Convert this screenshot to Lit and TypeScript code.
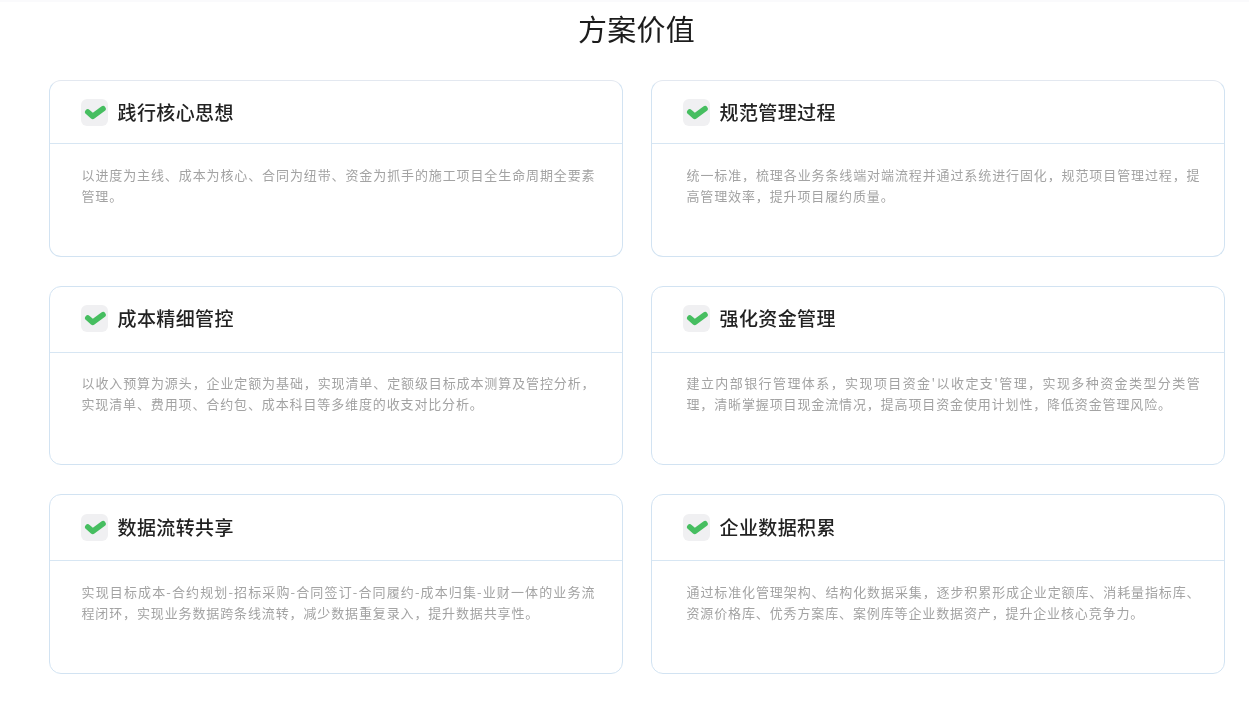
import { LitElement, html, css, svg } from "lit";
import { customElement } from "lit/decorators.js";

const cards = [
  { t: "践行核心思想", d: ["以进度为主线、成本为核心、合同为纽带、资金为抓手的施工项目全生命周期全要素", "管理。"] },
  { t: "规范管理过程", d: ["统一标准，梳理各业务条线端对端流程并通过系统进行固化，规范项目管理过程，提", "高管理效率，提升项目履约质量。"] },
  { t: "成本精细管控", d: ["以收入预算为源头，企业定额为基础，实现清单、定额级目标成本测算及管控分析，", "实现清单、费用项、合约包、成本科目等多维度的收支对比分析。"] },
  { t: "强化资金管理", d: ["建立内部银行管理体系，实现项目资金'以收定支'管理，实现多种资金类型分类管", "理，清晰掌握项目现金流情况，提高项目资金使用计划性，降低资金管理风险。"] },
  { t: "数据流转共享", d: ["实现目标成本-合约规划-招标采购-合同签订-合同履约-成本归集-业财一体的业务流", "程闭环，实现业务数据跨条线流转，减少数据重复录入，提升数据共享性。"] },
  { t: "企业数据积累", d: ["通过标准化管理架构、结构化数据采集，逐步积累形成企业定额库、消耗量指标库、", "资源价格库、优秀方案库、案例库等企业数据资产，提升企业核心竞争力。"] },
];

const check = svg`<path d="M6.8 13 L11.8 17.3 L22 9.8" fill="none" stroke="#46be60" stroke-width="5.6" stroke-linecap="round" stroke-linejoin="round"/>`;

@customElement("app-root")
export class AppRoot extends LitElement {
  static styles = css`
    :host {
      display: block;
      width: 1249px;
      height: 707px;
      background: #fff;
      overflow: hidden;
      font-family: "Noto Sans CJK SC", "Liberation Sans", sans-serif;
    }
    .page {
      display: flex;
      flex-direction: column;
      align-items: center;
      padding-left: 24px;
      border-top: 2px solid #fafafc;
      filter: blur(0.3px);
    }
    h1 {
      margin: 0;
      height: 78px;
      padding-top: 5px;
      box-sizing: border-box;
      font-size: 29px;
      line-height: 42px;
      font-weight: 400;
      color: #1c1c1c;
      letter-spacing: 0.3px;
    }
    .grid {
      display: grid;
      grid-template-columns: 574px 574px;
      grid-template-rows: 177px 179px 180px;
      column-gap: 28px;
      row-gap: 29px;
    }
    .card {
      box-sizing: border-box;
      border: 1px solid #d2e3f2;
      border-radius: 12px;
      background: #fff;
    }
    .card.r0 { border-top-color: #e3e8f0; }
    .head {
      box-sizing: border-box;
      height: 66px;
      padding: 0 0 1px 31px;
      display: flex;
      align-items: center;
      gap: 10px;
      border-bottom: 1px solid #d7e6f3;
    }
    .r0 .head {
      height: 63px;
      padding-bottom: 0;
    }
    .r1 .head { padding-bottom: 3px; }
    .icon {
      width: 27px;
      height: 27px;
      border-radius: 6px;
      background: #f0f0f2;
      flex: none;
    }
    .icon svg { display: block; }
    .title {
      font-size: 19px;
      line-height: 28px;
      font-weight: 500;
      letter-spacing: 0.4px;
      color: #222;
    }
    .body {
      padding: 20px 0 0 32px;
      font-size: 13px;
      line-height: 21px;
      letter-spacing: 0.87px;
      color: #a3a3a3;
    }
    .r1 .body { padding-top: 19px; }
    .card.right .body { padding-left: 35px; }
    .line { width: 514px; }
    .line.full { text-align: justify; text-align-last: justify; }
  `;

  render() {
    return html`<div class="page">
      <h1>方案价值</h1>
      <div class="grid">
        ${cards.map(
          (c, i) => html`<section class="card r${Math.floor(i / 2)} ${i % 2 ? "right" : ""}">
            <div class="head">
              <div class="icon"><svg width="27" height="27" viewBox="0 0 27 27">${check}</svg></div>
              <div class="title">${c.t}</div>
            </div>
            <div class="body">
              ${c.d.map((l, n) => html`<div class="line ${n === 0 ? "full" : ""}">${l}</div>`)}
            </div>
          </section>`
        )}
      </div>
    </div>`;
  }
}
